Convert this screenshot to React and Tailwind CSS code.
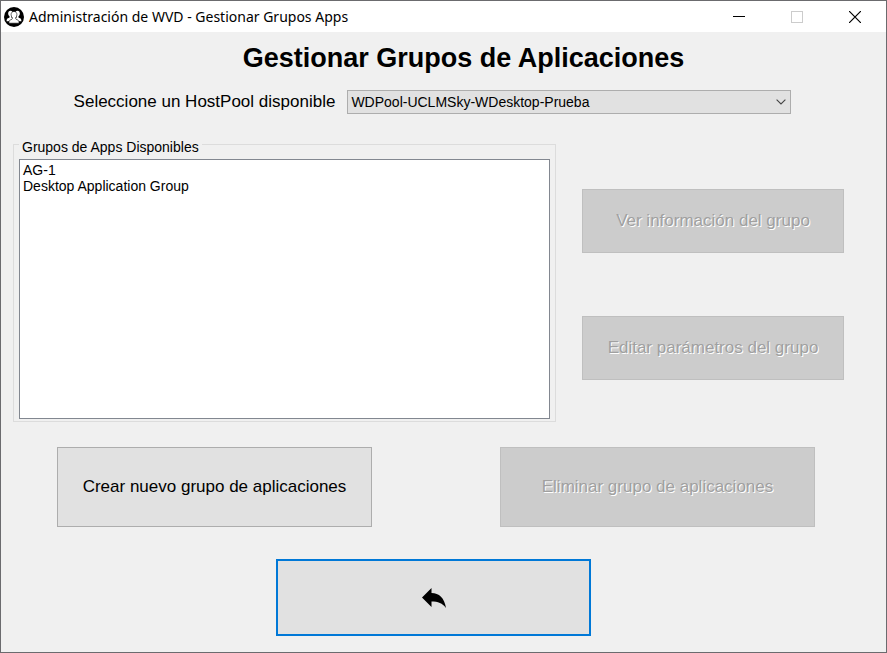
const groups = ["AG-1", "Desktop Application Group"];

function AppIcon() {
  return (
    <svg viewBox="0 0 20 20" className="size-5 shrink-0" aria-hidden="true">
      <circle cx="10" cy="10" r="10" fill="#000" />
      <g fill="#fff">
        <ellipse cx="6.500" cy="6.600" rx="2.300" ry="2.800" />
        <ellipse cx="13.500" cy="6.600" rx="2.300" ry="2.800" />
        <path d="M5.600 8.500h1.800v2l2 1.500v2.200H2.600c0-2 .4-2.600 1.400-3 1-.4 1.600-.6 1.600-1.200z" />
        <path d="M14.400 8.500h-1.800v2l-2 1.500v2.200h6.800c0-2-.4-2.600-1.400-3-1-.4-1.600-.6-1.600-1.200z" />
      </g>
      <path
        d="M10 4.400c1.800 0 2.900 1.300 2.900 3.200 0 1.300-.5 2.400-1.200 3.100v1c0 .5.5.7 1.400 1 1.500.5 2 1.200 2 3.500H4.900c0-2.300.5-3 2-3.500.9-.3 1.400-.5 1.400-1v-1c-.7-.7-1.200-1.800-1.200-3.100 0-1.900 1.100-3.200 2.900-3.200z"
        fill="#fff"
        stroke="#000"
        strokeWidth=".6"
      />
    </svg>
  );
}

function TitleBar() {
  return (
    <header className="flex h-[31px] items-center bg-white pl-[3px]">
      <AppIcon />
      <span className="ml-[5px] grow font-['Noto_Sans',sans-serif] text-[14px] leading-5">
        Administración de WVD - Gestionar Grupos Apps
      </span>
      <div className="flex h-full pr-0.5">
        <button aria-label="Minimizar" className="flex w-[58px] items-center justify-center">
          <svg viewBox="0 0 12 12" className="size-3" shapeRendering="crispEdges">
            <path d="M0 5.500h12" stroke="#000" />
          </svg>
        </button>
        <button aria-label="Maximizar" disabled className="flex w-[58px] items-center justify-center">
          <svg viewBox="0 0 12 12" className="size-3" shapeRendering="crispEdges">
            <path d="M.5.5h11v11H.5z" fill="none" stroke="#ccc" />
          </svg>
        </button>
        <button aria-label="Cerrar" className="flex w-[58px] items-center justify-center">
          <svg viewBox="0 0 12 12" className="size-3">
            <path d="M0 0l12 12M12 0L0 12" stroke="#000" strokeWidth="1.200" />
          </svg>
        </button>
      </div>
    </header>
  );
}

function ActionButton({ children, disabled, className }) {
  return (
    <button
      disabled={disabled}
      className={`border border-[#adadad] bg-[#e1e1e1] text-[17px] leading-5 disabled:border-[#bfbfbf] disabled:bg-[#ccc] disabled:text-[#a0a0a0] disabled:[text-shadow:1px_1px_0_#fff] ${className}`}
    >
      {children}
    </button>
  );
}

export default function App() {
  return (
    <div className="flex min-h-screen flex-col border border-[#6b6b6e] bg-[#f0f0f0] font-['Liberation_Sans',Arial,sans-serif] text-black">
      <TitleBar />
      <main className="flex grow flex-col">
        <h1 className="mt-2 pl-10 text-center text-[27px] leading-9 font-bold">
          Gestionar Grupos de Aplicaciones
        </h1>

        <div className="mt-3.5 flex items-center justify-center gap-3 pr-[22px]">
          <label htmlFor="hostpool" className="text-[17px] leading-5">
            Seleccione un HostPool disponible
          </label>
          <div className="relative w-[444px]">
            <select
              id="hostpool"
              className="block h-6 w-full appearance-none border border-[#adadad] bg-[#e1e1e1] px-[3px] text-[14px]"
            >
              <option>WDPool-UCLMSky-WDesktop-Prueba</option>
            </select>
            <svg
              viewBox="0 0 10 6"
              className="pointer-events-none absolute top-[9px] right-[5px] h-1.5 w-2.5"
              aria-hidden="true"
            >
              <path d="M.6.600L5 5l4.400-4.400" fill="none" stroke="#444" strokeWidth="1.100" />
            </svg>
          </div>
        </div>

        <div className="mt-5 flex gap-[26px] pr-[42px] pl-3">
          <fieldset className="min-w-0 grow border border-[#dcdcdc] px-[5px] pb-0.5">
            <legend className="px-[3px] pt-[5px] text-[14px] leading-4">Grupos de Apps Disponibles</legend>
            <select
              size={16}
              aria-label="Grupos de Apps Disponibles"
              className="mt-1 block h-[260px] w-full overflow-hidden border border-[#828790] bg-white px-px py-0.5 text-[14px] leading-4"
            >
              {groups.map((name) => (
                <option key={name} className="h-4 min-h-0 p-0 px-0.5">
                  {name}
                </option>
              ))}
            </select>
          </fieldset>
          <div className="flex w-[262px] shrink-0 flex-col gap-[63px] pt-[55px]">
            <ActionButton disabled className="h-16">Ver información del grupo</ActionButton>
            <ActionButton disabled className="h-16">Editar parámetros del grupo</ActionButton>
          </div>
        </div>

        <div className="mt-[25px] flex justify-center gap-32 pr-[15px]">
          <ActionButton className="h-20 w-[315px]">Crear nuevo grupo de aplicaciones</ActionButton>
          <ActionButton disabled className="h-20 w-[315px]">Eliminar grupo de aplicaciones</ActionButton>
        </div>

        <div className="mt-8 mb-4 flex justify-center pr-5">
          <button
            aria-label="Volver"
            className="flex h-[77px] w-[315px] items-center justify-center border-2 border-[#0078d7] bg-[#e1e1e1]"
          >
            <svg viewBox="0 0 24 20" className="h-5 w-6" aria-hidden="true">
              <path d="M0 9.500L9.500 0v5C17 5 22.500 10 24 20c-3.500-5-8-6.500-14.500-6.500V19z" />
            </svg>
          </button>
        </div>
      </main>
    </div>
  );
}
